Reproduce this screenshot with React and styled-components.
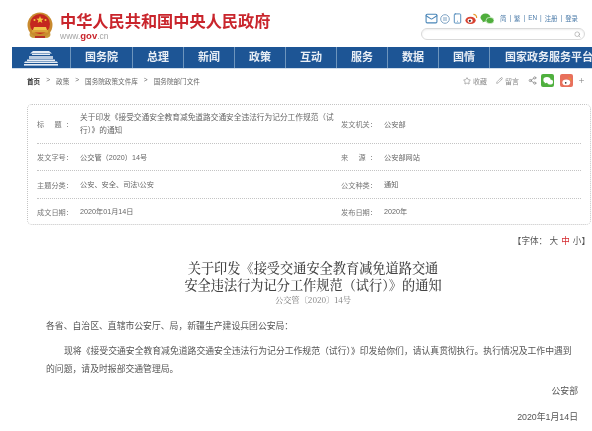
import React from "react";
import styled, { createGlobalStyle } from "styled-components";
import { Mail, Smartphone, Star, Pencil, Share2, Search, Plus } from "lucide-react";

const GlobalStyle = createGlobalStyle`
  html, body {
    margin: 0;
    padding: 0;
    background: #fff;
    overflow: hidden;
  }
  body {
    font-family: "Liberation Sans", "Noto Sans CJK SC", sans-serif;
  }
`;

const Page = styled.div`
  width: 592px;
  height: 431px;
  overflow: hidden;
  filter: blur(0.5px);
`;

const Header = styled.header`
  height: 47px;
  display: flex;
  justify-content: space-between;
  padding: 0 7px 0 27px;
  box-sizing: border-box;
`;

const Brand = styled.div`
  display: flex;
  gap: 7px;
  padding-top: 12px;
`;

const BrandText = styled.div`
  display: flex;
  flex-direction: column;
`;

const SiteName = styled.div`
  color: #c9252c;
  font-size: 16.2px;
  line-height: 19px;
  font-weight: 700;
  white-space: nowrap;
`;

const SiteUrl = styled.div`
  color: #a5a5a5;
  font-size: 8.5px;
  line-height: 10px;
  b {
    color: #c9252c;
    font-size: 9.5px;
  }
`;

const TopTools = styled.div`
  width: 164px;
  padding-top: 12px;
  display: flex;
  flex-direction: column;
  gap: 3px;
`;

const TopRow = styled.div`
  display: flex;
  align-items: center;
  gap: 2px;
  height: 13px;
  padding-left: 4px;
`;

const TopLinks = styled.div`
  display: flex;
  gap: 3px;
  margin-left: 4px;
  color: #4a7aa8;
  font-size: 6.4px;
  white-space: nowrap;
`;

const SearchBox = styled.div`
  height: 10px;
  border: 1px solid #d9d9d9;
  border-radius: 7px;
  box-shadow: inset 0 1px 2px #eee;
  display: flex;
  align-items: center;
  justify-content: flex-end;
  padding-right: 3px;
  color: #999;
`;

const Nav = styled.nav`
  margin-left: 12px;
  height: 21px;
  background: #1d5595;
  border-bottom: 1px solid #cfdcea;
  display: flex;
  overflow: hidden;
`;

const NavCell = styled.div`
  flex: 0 0 ${(p) => p.$w}px;
  box-sizing: border-box;
  border-right: 1px solid #6d95bd;
  color: #e8eef5;
  font-size: 11px;
  font-weight: 700;
  line-height: 21px;
  text-align: center;
  white-space: nowrap;
  svg {
    display: block;
    margin: 3px auto 0;
  }
`;

const NavLast = styled(NavCell)`
  flex: 1 0 auto;
  border: 0;
  padding-left: 15px;
  text-align: left;
`;

const Crumbs = styled.div`
  height: 23px;
  display: flex;
  align-items: center;
  justify-content: space-between;
  padding: 0 7px 0 27px;
`;

const CrumbList = styled.div`
  display: flex;
  gap: 6px;
  color: #666;
  font-size: 6.6px;
  b {
    color: #333;
  }
`;

const Actions = styled.div`
  display: flex;
  align-items: center;
  color: #888;
  font-size: 7px;
`;

const ActionLabel = styled.span`
  margin: 0 9px 0 2px;
`;

const ShareTile = styled.div`
  width: 13px;
  height: 13px;
  border-radius: 2px;
  margin-left: ${(p) => p.$gap}px;
  background: ${(p) => p.$color};
  display: flex;
  align-items: center;
  justify-content: center;
`;

const MoreIcon = styled(Plus)`
  margin-left: 5px;
`;

const Card = styled.section`
  margin: 12px 1px 0 27px;
  height: 121px;
  box-sizing: border-box;
  border: 1px dotted #c4c4c4;
  border-radius: 5px;
  padding: 0 9px;
`;

const Row = styled.div`
  height: ${(p) => p.$h}px;
  box-sizing: border-box;
  display: grid;
  grid-template-columns: 43px 261px 43px 1fr;
  align-items: center;
  border-bottom: ${(p) => (p.$last ? "0" : "1px dotted #c4c4c4")};
`;

const Label = styled.div`
  color: #777;
  font-size: 7.2px;
  width: 36px;
  text-align-last: justify;
`;

const Value = styled.div`
  color: #666;
  font-size: 7.2px;
  line-height: 13px;
`;

const TitleValue = styled(Value)`
  font-size: 7.7px;
  width: 256px;
  align-self: start;
  padding-top: 6px;
`;

const SizeBar = styled.div`
  margin-top: 10px;
  padding-right: 2px;
  text-align: right;
  color: #555;
  font-size: 8.6px;
  line-height: 12px;
  em {
    font-style: normal;
    color: #d4282d;
    margin: 0 3px;
  }
`;

const Heading = styled.h1`
  margin: 12px 0 0;
  padding-left: 34px;
  text-align: center;
  color: #444;
  font-size: 13.2px;
  line-height: 17px;
  font-weight: 500;
  font-family: "Noto Serif CJK SC", "Noto Sans CJK SC", serif;
`;

const DocNo = styled.div`
  margin-top: 1px;
  padding-left: 34px;
  text-align: center;
  color: #777;
  font-size: 8.2px;
  line-height: 11px;
  font-family: "Noto Serif CJK SC", "Noto Sans CJK SC", serif;
`;

const Body = styled.article`
  margin-top: 12px;
  padding: 0 14px 0 46px;
  color: #555;
  font-size: 8.84px;
  line-height: 18.5px;
`;

const Para = styled.p`
  margin: ${(p) => p.$top || 0}px 0 0;
  text-indent: ${(p) => (p.$indent ? "18px" : "0")};
  text-align: ${(p) => (p.$right ? "right" : "left")};
  max-width: ${(p) => (p.$indent ? "530px" : "none")};
`;

const Emblem = () => (
  <svg width="26" height="28" viewBox="0 0 26 28">
    <path d="M3 20 Q1 26 8 26 L18 26 Q25 26 23 20Z" fill="#c99a3b" />
    <circle cx="13" cy="13" r="12.5" fill="#c98a2e" />
    <circle cx="13" cy="12" r="10" fill="#c4261f" />
    <path d="M13 4l1 2.6 2.7.1-2.1 1.7.7 2.6-2.3-1.5-2.3 1.5.7-2.6-2.1-1.7 2.7-.1z" fill="#f2c53d" />
    <circle cx="7.5" cy="8" r="1" fill="#f2c53d" />
    <circle cx="18.5" cy="8" r="1" fill="#f2c53d" />
    <path d="M6 18h14l-1-3H7z" fill="#f0c24a" />
    <rect x="5" y="18" width="16" height="2.5" fill="#d9a53b" />
    <path d="M8 24h10v2H8z" fill="#b5302a" />
  </svg>
);

const Gate = () => (
  <svg width="34" height="16" viewBox="0 0 34 16" fill="#e6edf5">
    <path d="M9 1h16l3 2.500H6z" />
    <rect x="8" y="4" width="18" height="1" />
    <path d="M5 6h24v3H5z" fill="#b9cbe0" />
    <path d="M3 9.500h28v1.500H3z" />
    <path d="M0 13h34l-1-1.500H1z" />
    <rect x="0" y="14" width="34" height="1.600" />
  </svg>
);

const WeiboIcon = ({ color = "#d8402f", size = 13 }) => (
  <svg width={size} height={size} viewBox="0 0 14 14">
    <ellipse cx="6" cy="9" rx="5.500" ry="4" fill={color} />
    <ellipse cx="5.500" cy="9.300" rx="2.800" ry="2.200" fill="#fff" />
    <circle cx="5.200" cy="9.500" r="1.200" fill="#333" />
    <path d="M9 2.500a3.500 3.500 0 0 1 3.500 4" stroke="#e89a2d" strokeWidth="1.300" fill="none" />
  </svg>
);

const WechatIcon = ({ color = "#4fae3c", size = 14 }) => (
  <svg width={size} height={size} viewBox="0 0 14 14" fill={color}>
    <ellipse cx="5.500" cy="5.500" rx="5" ry="4" />
    <path d="M3 8l-.5 2.500L5.500 9z" />
    <ellipse cx="10" cy="8.500" rx="4" ry="3.200" stroke="#fff" strokeWidth="0.600" />
  </svg>
);

const CircleIcon = () => (
  <svg width="10" height="10" viewBox="0 0 10 10" fill="none" stroke="#7fa3c4">
    <circle cx="5" cy="5" r="4.300" />
    <path d="M3 4h4M3 6h4" />
  </svg>
);

const navItems = [
  ["国务院", 62],
  ["总理", 51],
  ["新闻", 51],
  ["政策", 51],
  ["互动", 51],
  ["服务", 51],
  ["数据", 51],
  ["国情", 51],
];

const rows = [
  { h: 39, l1: "标 题：", l2: "发文机关：", v2: "公安部" },
  { h: 27, l1: "发文字号：", v1: "公交管（2020）14号", l2: "来 源：", v2: "公安部网站" },
  { h: 28, l1: "主题分类：", v1: "公安、安全、司法\\公安", l2: "公文种类：", v2: "通知" },
  { h: 25, l1: "成文日期：", v1: "2020年01月14日", l2: "发布日期：", v2: "2020年", last: true },
];

function App() {
  return (
    <Page>
      <GlobalStyle />
      <Header>
        <Brand>
          <Emblem />
          <BrandText>
            <SiteName>中华人民共和国中央人民政府</SiteName>
            <SiteUrl>
              www.<b>gov</b>.cn
            </SiteUrl>
          </BrandText>
        </Brand>
        <TopTools>
          <TopRow>
            <Mail size={13} color="#4a86b8" />
            <CircleIcon />
            <Smartphone size={11} color="#4a86b8" />
            <WeiboIcon />
            <WechatIcon />
            <TopLinks>
              <span>简</span>|<span>繁</span>|<span>EN</span>|<span>注册</span>|<span>登录</span>
            </TopLinks>
          </TopRow>
          <SearchBox>
            <Search size={7} />
          </SearchBox>
        </TopTools>
      </Header>
      <Nav>
        <NavCell $w={59}>
          <Gate />
        </NavCell>
        {navItems.map(([name, w]) => (
          <NavCell key={name} $w={w}>
            {name}
          </NavCell>
        ))}
        <NavLast $w={102}>国家政务服务平台</NavLast>
      </Nav>
      <Crumbs>
        <CrumbList>
          <b>首页</b>
          <span>&gt;</span>
          <span>政策</span>
          <span>&gt;</span>
          <span>国务院政策文件库</span>
          <span>&gt;</span>
          <span>国务院部门文件</span>
        </CrumbList>
        <Actions>
          <Star size={8} />
          <ActionLabel>收藏</ActionLabel>
          <Pencil size={7} />
          <ActionLabel>留言</ActionLabel>
          <Share2 size={9} />
          <ShareTile $color="#4fb03e" $gap={4}>
            <WechatIcon color="#fff" size={10} />
          </ShareTile>
          <ShareTile $color="#e8705c" $gap={6}>
            <WeiboIcon color="#fff" size={10} />
          </ShareTile>
          <MoreIcon size={7} />
        </Actions>
      </Crumbs>
      <Card>
        {rows.map((r) => (
          <Row key={r.l1} $h={r.h} $last={r.last}>
            <Label>{r.l1}</Label>
            {r.v1 ? (
              <Value>{r.v1}</Value>
            ) : (
              <TitleValue>
                关于印发《接受交通安全教育减免道路交通安全违法行为记分工作规范（试行）》的通知
              </TitleValue>
            )}
            <Label>{r.l2}</Label>
            <Value>{r.v2}</Value>
          </Row>
        ))}
      </Card>
      <SizeBar>
        【字体： 大<em>中</em>小】
      </SizeBar>
      <Heading>
        关于印发《接受交通安全教育减免道路交通
        <br />
        安全违法行为记分工作规范（试行）》的通知
      </Heading>
      <DocNo>公交管〔2020〕14号</DocNo>
      <Body>
        <Para>各省、自治区、直辖市公安厅、局，新疆生产建设兵团公安局：</Para>
        <Para $top={6} $indent>
          现将《接受交通安全教育减免道路交通安全违法行为记分工作规范（试行）》印发给你们，请认真贯彻执行。执行情况及工作中遇到的问题，请及时报部交通管理局。
        </Para>
        <Para $top={3} $right>
          公安部
        </Para>
        <Para $top={8} $right>
          2020年1月14日
        </Para>
      </Body>
    </Page>
  );
}

export default App;
